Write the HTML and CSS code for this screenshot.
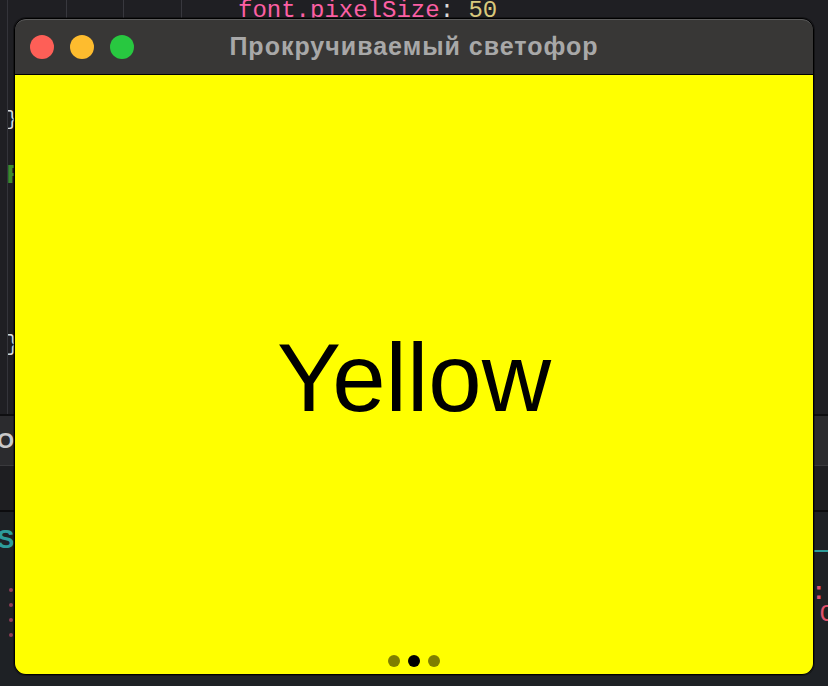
FILE: index.html
```html
<!DOCTYPE html>
<html lang="ru">
<head>
<meta charset="utf-8">
<title>Прокручиваемый светофор</title>
<link rel="stylesheet" href="styles.css">
</head>
<body>
<div class="desktop">
  <div class="editor">
    <div class="gutter-line"></div>
    <span class="guide g1"></span>
    <span class="guide g2"></span>
    <span class="guide g3"></span>
    <div class="code">
      <div class="line l-top"><span class="prop">font.pixelSize</span><span class="punc">:</span> <span class="num">50</span></div>
      <div class="line l-brace1"><span class="punc">}</span></div>
      <div class="line l-f"><span class="type">F</span></div>
      <div class="line l-brace2"><span class="punc">}</span></div>
    </div>
  </div>
  <div class="panel-bar"><span class="panel-text">O</span></div>
  <div class="panel-mid"></div>
  <div class="console">
    <div class="console-row row-s"><span class="teal">S</span><span class="teal-line"></span></div>
    <div class="console-row row-dots">
      <div class="dots-col"><i></i><i></i><i></i><i></i></div>
      <div class="right-pink"><span class="colon">:</span><span class="cee">C</span></div>
    </div>
  </div>

  <div class="window">
    <div class="titlebar">
      <div class="lights">
        <span class="light red"></span>
        <span class="light amber"></span>
        <span class="light green"></span>
      </div>
      <div class="title">Прокручиваемый светофор</div>
    </div>
    <div class="content">
      <div class="label">Yellow</div>
      <div class="pager">
        <span class="dot"></span>
        <span class="dot active"></span>
        <span class="dot"></span>
      </div>
    </div>
  </div>
</div>
</body>
</html>
```

FILE: styles.css
```css
* { box-sizing: border-box; }
html, body {
  margin: 0;
  padding: 0;
  background: #1f1f23;
}
.desktop {
  position: relative;
  width: 828px;
  height: 686px;
  overflow: hidden;
  background: #1f2024;
  font-family: "Liberation Sans", Arial, sans-serif;
}

/* editor background */
.editor {
  position: relative;
  height: 416px;
  background: #1f1f23;
  border-bottom: 2px solid #0f0f11;
  overflow: hidden;
}
.gutter-line {
  position: absolute;
  left: 7px;
  top: 0;
  bottom: 0;
  width: 1px;
  background: #34343a;
}
.guide { position: absolute; top: 0; width: 1px; height: 20px; background: #38383e; }
.g1 { left: 66px; }
.g2 { left: 123px; }
.g3 { left: 181px; }

.code {
  font-family: "Liberation Mono", "DejaVu Sans Mono", monospace;
  font-size: 24px;
  line-height: 28px;
}
.line { white-space: pre; height: 28px; }
.l-top { margin-top: -3px; padding-left: 238px; }
.l-brace1 { margin-top: 81px; padding-left: 6px; font-size: 20px; }
.l-f { margin-top: 28px; padding-left: 6px; font-size: 28px; }
.l-brace2 { margin-top: 141px; padding-left: 6px; font-size: 22px; }
.prop { color: #fc5fa3; }
.punc { color: #d9d9d9; }
.num { color: #d9c97c; }
.type { color: #3e8a2e; font-weight: bold; }

.panel-bar {
  height: 50px;
  background: #2b2b2e;
  border-bottom: 1px solid #3a3a3d;
  display: flex;
  align-items: center;
}
.panel-text {
  margin-left: -3px;
  font-size: 22px;
  font-weight: bold;
  color: #c9c9c9;
}
.panel-mid {
  height: 46px;
  background: #1e1e21;
  border-bottom: 2px solid #0c0c0e;
}
.console {
  background: #1e2125;
  height: 180px;
}
.console-row { position: relative; }
.row-s {
  height: 40px;
  display: flex;
  align-items: flex-end;
}
.teal {
  margin-left: -3px;
  font-size: 26px;
  font-weight: bold;
  color: #2d9c9a;
  line-height: 26px;
}
.teal-line {
  margin-left: auto;
  width: 14px;
  height: 2px;
  background: #2d9c9a;
}
.row-dots {
  display: flex;
  justify-content: space-between;
  padding-top: 36px;
}
.dots-col {
  display: flex;
  flex-direction: column;
  gap: 11px;
  padding-left: 9px;
}
.dots-col i {
  display: block;
  width: 4px;
  height: 4px;
  border-radius: 2px;
  background: #8e3d56;
}
.right-pink {
  display: flex;
  flex-direction: column;
  align-items: flex-end;
  color: #e0506b;
  font-family: "Liberation Mono", monospace;
  font-size: 24px;
  line-height: 22px;
  margin-top: -6px;
}
.colon { margin-right: 2px; font-weight: bold; }
.cee { margin-right: -6px; }

/* window */
.window {
  position: absolute;
  left: 14px;
  top: 18px;
  width: 800px;
  height: 657px;
  border-radius: 12px;
  border: 1px solid #000;
  overflow: hidden;
  display: flex;
  flex-direction: column;
  box-shadow: 0 0 0 1px rgba(0,0,0,0.35);
}
.titlebar {
  position: relative;
  height: 56px;
  flex: none;
  background: #383736;
  border-top: 1px solid #5c5c5c;
  border-bottom: 1px solid #000;
  border-radius: 11px 11px 0 0;
  display: flex;
  align-items: center;
  justify-content: center;
}
.lights {
  position: absolute;
  left: 15px;
  top: 15px;
  display: flex;
  gap: 16px;
}
.light {
  width: 24px;
  height: 24px;
  border-radius: 50%;
}
.red { background: #fe5f57; }
.amber { background: #febc2e; }
.green { background: #28c840; }
.title {
  font-size: 25px;
  letter-spacing: 1px;
  font-weight: bold;
  color: #a8a8a8;
  margin-top: -2px;
}
.content {
  flex: 1;
  background: #ffff00;
  display: flex;
  flex-direction: column;
  align-items: center;
  position: relative;
}
.label {
  flex: 1;
  display: flex;
  align-items: center;
  font-family: "Liberation Sans", Arial, sans-serif;
  font-size: 96px;
  color: #000;
  padding-top: 26px;
}
.pager {
  display: flex;
  gap: 8px;
  padding-bottom: 7px;
}
.dot {
  width: 12px;
  height: 12px;
  border-radius: 50%;
  background: rgba(0,0,0,0.5);
}
.dot.active { background: #000; }
```
